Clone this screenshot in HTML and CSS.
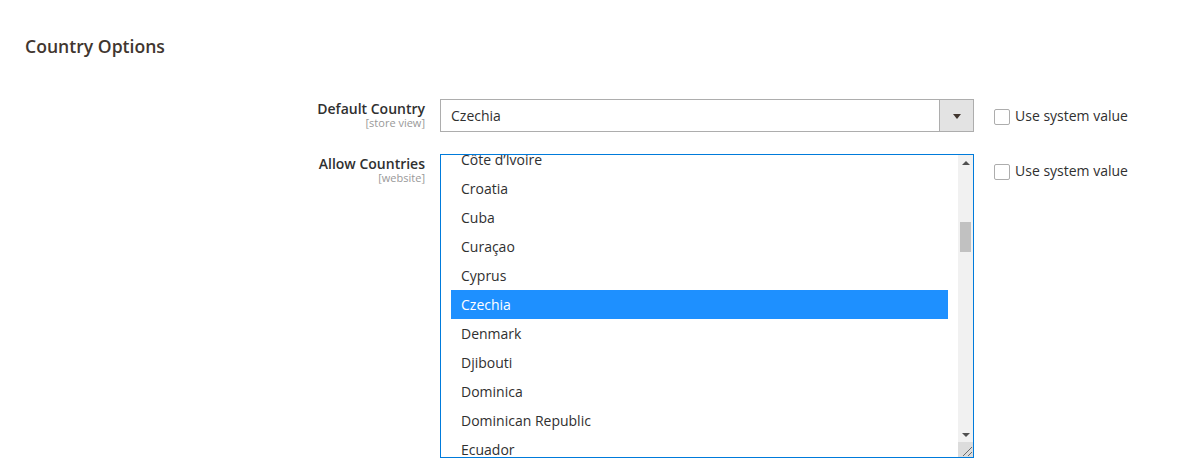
FILE: index.html
```html
<!DOCTYPE html>
<html lang="en">

<head>
    <meta charset="UTF-8" />
    <meta name="viewport" content="width=device-width, initial-scale=1.0" />
    <title>Country Options</title>
    <link rel="stylesheet" href="styles.css">
</head>

<body>
    <div class="config-section">
        <h2 class="section-title">Country Options</h2>

        <div class="config-row">
            <div class="field-label">
                <span class="label">Default Country</span>
                <span class="scope">[store view]</span>
            </div>
            <div class="admin-select">
                <span class="value">Czechia</span>
                <span class="arrow"><i></i></span>
            </div>
            <label class="use-default">
                <input type="checkbox" class="checkbox">
                <span>Use system value</span>
            </label>
        </div>

        <div class="config-row">
            <div class="field-label">
                <span class="label">Allow Countries</span>
                <span class="scope">[website]</span>
            </div>
            <div class="multiselect">
                <div class="options">
                    <ul>
                        <li>Côte d’Ivoire</li>
                        <li>Croatia</li>
                        <li>Cuba</li>
                        <li>Curaçao</li>
                        <li>Cyprus</li>
                        <li class="selected">Czechia</li>
                        <li>Denmark</li>
                        <li>Djibouti</li>
                        <li>Dominica</li>
                        <li>Dominican Republic</li>
                        <li>Ecuador</li>
                    </ul>
                </div>
                <div class="scrollbar">
                    <span class="sb-btn"><i class="up"></i></span>
                    <div class="sb-track">
                        <div class="sb-thumb"></div>
                    </div>
                    <span class="sb-btn"><i class="down"></i></span>
                    <span class="sb-corner">
                        <svg width="15" height="15" viewBox="0 0 15 15">
                            <line x1="5" y1="14" x2="14" y2="5" stroke="#6b6b6b" stroke-width="1" />
                            <line x1="10" y1="14" x2="14" y2="10" stroke="#6b6b6b" stroke-width="1" />
                        </svg>
                    </span>
                </div>
            </div>
            <label class="use-default">
                <input type="checkbox" class="checkbox">
                <span>Use system value</span>
            </label>
        </div>
    </div>
</body>

</html>
```

FILE: styles.css
```css
* {
    box-sizing: border-box;
    margin: 0;
    padding: 0;
}

body {
    font-family: 'Open Sans', 'DejaVu Sans', sans-serif;
    font-size: 14px;
    line-height: 19px;
    color: #303030;
    background: #fff;
}

.config-section {
    padding: 34px 0 0 25px;
}

.section-title {
    font-size: 17.6px;
    font-weight: 600;
    line-height: 24px;
    color: #41362f;
    margin-bottom: 41px;
}

.config-row {
    display: grid;
    grid-template-columns: 415px 534px auto;
    align-items: start;
}

.config-row + .config-row {
    margin-top: 22px;
}

.field-label {
    text-align: right;
    padding-right: 15px;
}

.field-label .label {
    display: block;
    font-weight: 600;
}

.field-label .scope {
    display: block;
    font-size: 11px;
    line-height: 10px;
    color: #999;
}

/* single select */
.admin-select {
    display: flex;
    height: 33px;
    border: 1px solid #adadad;
    background: #fff;
}

.admin-select .value {
    flex: 1;
    padding: 6px 10px;
}

.admin-select .arrow {
    width: 34px;
    border-left: 1px solid #adadad;
    background: #e3e3e3;
    display: flex;
    align-items: center;
    justify-content: center;
}

.admin-select .arrow i {
    width: 0;
    height: 0;
    border-left: 4px solid transparent;
    border-right: 4px solid transparent;
    border-top: 5px solid #41362f;
    margin-top: 1px;
}

/* multi select */
.multiselect {
    display: flex;
    height: 304px;
    border: 1px solid #007bdb;
    background: #fff;
    overflow: hidden;
}

.options {
    flex: 1;
    padding: 0 10px;
    overflow: hidden;
}

.options ul {
    list-style: none;
    margin-top: -10px;
}

.options li {
    padding: 5px 10px;
    white-space: nowrap;
}

.options li.selected {
    background: #1e90ff;
    color: #fff;
}

.scrollbar {
    width: 15px;
    display: flex;
    flex-direction: column;
    background: #f1f1f1;
}

.sb-btn {
    height: 15px;
    display: flex;
    align-items: center;
    justify-content: center;
}

.sb-btn i {
    width: 0;
    height: 0;
    border-left: 4px solid transparent;
    border-right: 4px solid transparent;
}

.sb-btn i.up {
    border-bottom: 4px solid #505050;
}

.sb-btn i.down {
    border-top: 4px solid #505050;
}

.sb-track {
    flex: 1;
    padding: 52px 2px 0;
}

.sb-thumb {
    height: 30px;
    background: #c1c1c1;
}

.sb-corner {
    height: 15px;
    background: #dcdcdc;
    display: block;
}

.sb-corner svg {
    display: block;
}

/* use system value */
.use-default {
    display: flex;
    align-items: flex-start;
    gap: 5px;
    margin-left: 20px;
    padding-top: 7px;
    cursor: pointer;
}

.use-default .checkbox {
    appearance: none;
    width: 16px;
    height: 16px;
    margin-top: 3px;
    border: 1px solid #adadad;
    border-radius: 2px;
    background: #fff;
}
```
